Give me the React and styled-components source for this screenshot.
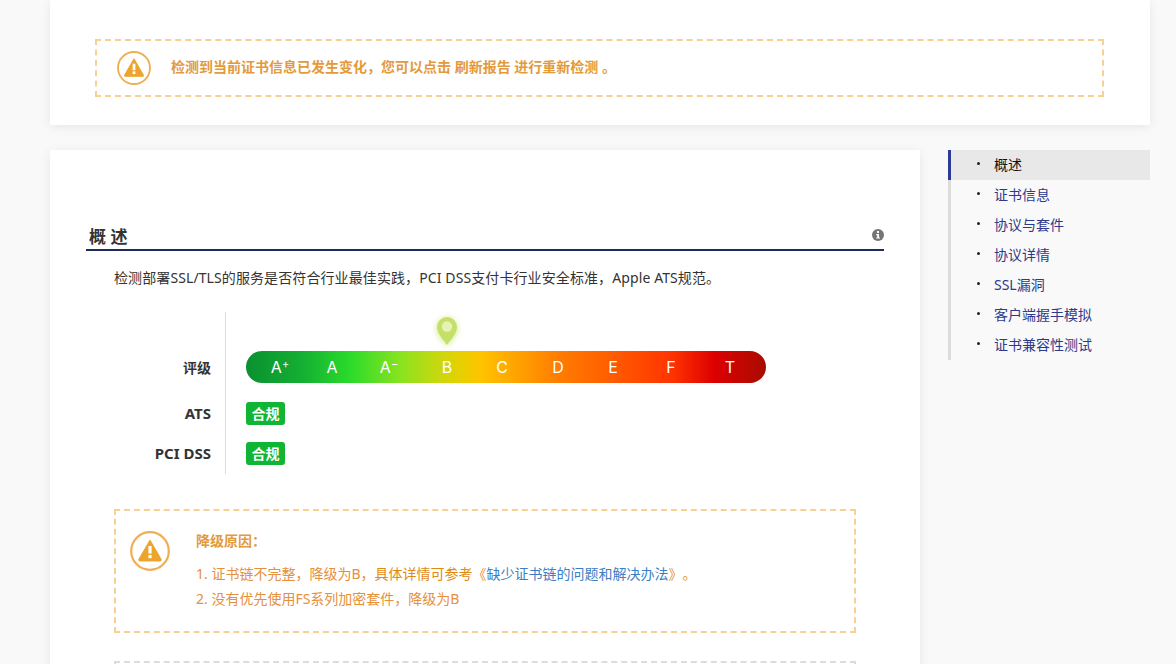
import React from 'react';
import styled, { createGlobalStyle } from 'styled-components';

const navItems = ['概述', '证书信息', '协议与套件', '协议详情', 'SSL漏洞', '客户端握手模拟', '证书兼容性测试'];
const grades = [
  { name: 'A', mark: '+' },
  { name: 'A' },
  { name: 'A', mark: '−' },
  { name: 'B' },
  { name: 'C' },
  { name: 'D' },
  { name: 'E' },
  { name: 'F' },
  { name: 'T' },
];

const WarnIcon = ({ size }) => (
  <IconBox $size={size}>
    <svg width={size} height={size} viewBox="0 0 40 40">
      <circle cx="20" cy="20" r="18.8" fill="none" stroke="#f0ae52" strokeWidth="2.2" />
      <path d="M20 9.5 L31 28.5 a1 1 0 0 1 -1 1.2 H10 a1 1 0 0 1 -1 -1.2 Z" fill="#eda42c" stroke="#eda42c" strokeWidth="1.4" strokeLinejoin="round" />
      <rect x="18.4" y="15" width="3.2" height="7.6" fill="#fff" />
      <rect x="18.4" y="24" width="3.2" height="3.2" fill="#fff" />
    </svg>
  </IconBox>
);

const App = () => {
  return (
    <Page>
      <GlobalStyle />
      <TopCard>
        <Notice>
          <WarnIcon size={34} />
          <NoticeText>检测到当前证书信息已发生变化，您可以点击 刷新报告 进行重新检测 。</NoticeText>
        </Notice>
      </TopCard>
      <Columns>
        <MainCard>
          <SectionHead>
            <SectionTitle>概 述</SectionTitle>
            <svg width="12" height="12" viewBox="0 0 12 12">
              <circle cx="6" cy="6" r="6" fill="#757575" />
              <rect x="5" y="2" width="2" height="2" fill="#fff" />
              <path d="M4.2 5 H7 V8.4 H8 V9.6 H4.2 V8.4 H5.2 V6.2 H4.2 Z" fill="#fff" />
            </svg>
          </SectionHead>
          <Intro>检测部署SSL/TLS的服务是否符合行业最佳实践，PCI DSS支付卡行业安全标准，Apple ATS规范。</Intro>
          <Rating>
            <RatingRow $height={81}>
              <RowLabel $size={14}>评级</RowLabel>
              <RowValue>
                <Pin>
                  <svg width="22" height="30" viewBox="0 0 22 30">
                    <path d="M11 29 C7 23 1 17.5 1 11 a10 10 0 0 1 20 0 C21 17.5 15 23 11 29 Z" fill="#c4e066" />
                    <circle cx="11" cy="10.5" r="5.2" fill="#e6f2b8" />
                  </svg>
                </Pin>
                <GradeBar>
                  {grades.map((grade, i) => (
                    <Grade key={i}>
                      {grade.name}
                      {grade.mark && <GradeMark>{grade.mark}</GradeMark>}
                    </Grade>
                  ))}
                </GradeBar>
              </RowValue>
            </RatingRow>
            <RatingRow $height={40}>
              <RowLabel $size={15}>ATS</RowLabel>
              <RowValue $center><Badge>合规</Badge></RowValue>
            </RatingRow>
            <RatingRow $height={41}>
              <RowLabel $size={15}>PCI DSS</RowLabel>
              <RowValue $center><Badge>合规</Badge></RowValue>
            </RatingRow>
          </Rating>
          <Reason>
            <WarnIcon size={40} />
            <ReasonBody>
              <ReasonTitle>降级原因：</ReasonTitle>
              <ReasonLine>
                <Soft>1. 证书链不完整，降级为B，</Soft>
                <Strong>具体详情可参考</Strong>
                <Soft>《</Soft>
                <DocLink>缺少证书链的问题和解决办法</DocLink>
                <Soft>》。</Soft>
              </ReasonLine>
              <ReasonLine><Soft>2. 没有优先使用FS系列加密套件，降级为B</Soft></ReasonLine>
            </ReasonBody>
          </Reason>
          <NextBox />
        </MainCard>
        <SideNav>
          {navItems.map((item, i) => (
            <NavItem key={item} $active={i === 0}>{item}</NavItem>
          ))}
        </SideNav>
      </Columns>
    </Page>
  );
};

const GlobalStyle = createGlobalStyle`
  html, body {
    margin: 0;
    padding: 0;
    background: #f9f9f9;
    overflow: hidden;
  }
  body {
    font-family: "Noto Sans", "Noto Sans CJK SC", sans-serif;
    font-size: 14px;
    color: #333;
    text-spacing-trim: space-all;
  }
`;

const Page = styled.div`
  height: 664px;
  overflow: hidden;
  padding: 0 26px 0 50px;
  box-sizing: border-box;
`;

const TopCard = styled.div`
  height: 125px;
  box-sizing: border-box;
  padding: 39px 46px 0 45px;
  background: #fff;
  box-shadow: 0 2px 10px rgba(0, 0, 0, 0.08);
`;

const Notice = styled.div`
  height: 58px;
  box-sizing: border-box;
  display: flex;
  align-items: center;
  gap: 20px;
  padding-left: 20px;
  border: 2px dashed #f7d095;
`;

const IconBox = styled.div`
  flex: none;
  width: ${(p) => p.$size}px;
  height: ${(p) => p.$size}px;
  svg {
    display: block;
  }
`;

const NoticeText = styled.div`
  font-size: 14px;
  font-weight: 700;
  color: #e39a3c;
  padding-bottom: 4px;
`;

const Columns = styled.div`
  display: flex;
  align-items: flex-start;
  gap: 28px;
  margin-top: 25px;
`;

const MainCard = styled.div`
  flex: none;
  width: 870px;
  height: 640px;
  box-sizing: border-box;
  padding: 73px 36px 0;
  background: #fff;
  box-shadow: 0 2px 10px rgba(0, 0, 0, 0.08);
`;

const SectionHead = styled.div`
  display: flex;
  align-items: center;
  justify-content: space-between;
  height: 24px;
  padding: 0 0 2px 3px;
  border-bottom: 2px solid #1c2c5e;
`;

const SectionTitle = styled.div`
  font-size: 17px;
  font-weight: 700;
  color: #333;
`;

const Intro = styled.div`
  margin: 15px 0 0 28px;
  line-height: 24px;
  font-size: 14px;
  letter-spacing: 0.1px;
  color: #333;
`;

const Rating = styled.div`
  margin: 22px 0 0 28px;
`;

const RatingRow = styled.div`
  display: flex;
  height: ${(p) => p.$height}px;
  align-items: stretch;
`;

const RowLabel = styled.div`
  width: 97px;
  height: 40px;
  flex: none;
  display: flex;
  align-items: center;
  justify-content: flex-end;
  padding-right: 14px;
  margin-top: ${(p) => (p.$size === 14 ? '35px' : '0')};
  font-weight: 700;
  font-size: ${(p) => p.$size}px;
  color: #333;
`;

const RowValue = styled.div`
  position: relative;
  flex: 1;
  display: flex;
  align-items: ${(p) => (p.$center ? 'center' : 'flex-start')};
  padding-left: 20px;
  border-left: 1px solid #ddd;
`;

const Pin = styled.div`
  position: absolute;
  left: 210px;
  top: 4px;
  filter: drop-shadow(0 1px 3px rgba(196, 224, 102, 0.8));
  svg {
    display: block;
  }
`;

const GradeBar = styled.div`
  width: 520px;
  height: 32px;
  margin-top: 39px;
  box-sizing: border-box;
  padding-left: 8px;
  display: grid;
  grid-template-columns: 52px 52px 62px 54px 56px 56px 54px 62px 56px;
  align-items: center;
  border-radius: 16px;
  background: linear-gradient(
    to right,
    #0a9030 0%,
    #14b033 11%,
    #2bdb2b 20%,
    #8ce31f 30%,
    #c8d80e 37%,
    #e5d000 41%,
    #ffc400 45%,
    #ff7d00 60%,
    #ff5a00 71%,
    #ff3300 82%,
    #dd0000 90%,
    #a80c00 100%
  );
`;

const Grade = styled.span`
  font-family: Inter, sans-serif;
  font-size: 16px;
  color: #fff;
  text-align: center;
  font-weight: 400;
`;

const GradeMark = styled.sup`
  font-size: 11px;
  line-height: 0;
  vertical-align: 5px;
`;

const Badge = styled.span`
  width: 39px;
  height: 23px;
  line-height: 23px;
  text-align: center;
  border-radius: 3px;
  background: #11b536;
  color: #fff;
  font-size: 14px;
  font-weight: 700;
`;

const Reason = styled.div`
  display: flex;
  gap: 26px;
  height: 124px;
  box-sizing: border-box;
  margin: 35px 28px 0;
  padding: 20px 14px 0;
  border: 2px dashed #f7d095;
`;

const ReasonBody = styled.div`
  font-size: 14px;
`;

const ReasonTitle = styled.div`
  font-weight: 700;
  color: #e39a3c;
  line-height: 20px;
  margin-bottom: 10px;
`;

const ReasonLine = styled.div`
  line-height: 25px;
`;

const Soft = styled.span`
  color: #e5903a;
`;

const Strong = styled.span`
  color: #e08a14;
`;

const DocLink = styled.a`
  color: #3b80c4;
`;

const NextBox = styled.div`
  height: 100px;
  margin: 28px 28px 0;
  border: 2px dashed #dcdcdc;
`;

const SideNav = styled.ul`
  flex: none;
  width: 199px;
  margin: 0;
  padding: 0;
  list-style: none;
  border-left: 3px solid #dcdcdc;
`;

const NavItem = styled.li`
  position: relative;
  height: 30px;
  line-height: 30px;
  margin-left: -3px;
  padding-left: 43px;
  font-size: 14px;
  color: ${(p) => (p.$active ? '#111' : '#2d3a8c')};
  background: ${(p) => (p.$active ? '#e8e8e8' : 'transparent')};
  border-left: 3px solid ${(p) => (p.$active ? '#2d3a96' : 'transparent')};
  &::before {
    content: '';
    position: absolute;
    left: 26px;
    top: 12px;
    width: 3px;
    height: 3px;
    border-radius: 50%;
    background: #222;
  }
`;

export default App;
